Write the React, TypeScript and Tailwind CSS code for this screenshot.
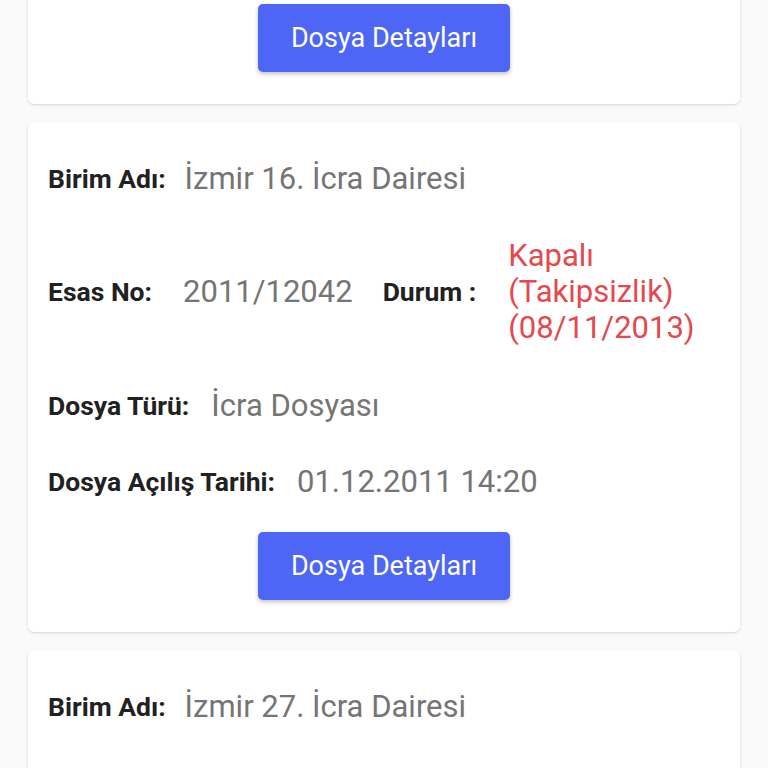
type CaseFile = {
  id: string;
  birim: string;
  esasNo: string;
  durum: string;
  tur: string;
  acilis: string;
};

const files: CaseFile[] = [
  {
    id: '1',
    birim: 'İzmir 12. İcra Dairesi',
    esasNo: '2010/9876',
    durum: 'Kapalı (Takipsizlik) (02/05/2013)',
    tur: 'İcra Dosyası',
    acilis: '14.06.2010 10:05',
  },
  {
    id: '2',
    birim: 'İzmir 16. İcra Dairesi',
    esasNo: '2011/12042',
    durum: 'Kapalı (Takipsizlik) (08/11/2013)',
    tur: 'İcra Dosyası',
    acilis: '01.12.2011 14:20',
  },
  {
    id: '3',
    birim: 'İzmir 27. İcra Dairesi',
    esasNo: '2012/4411',
    durum: 'Kapalı (Takipsizlik) (21/03/2014)',
    tur: 'İcra Dosyası',
    acilis: '09.02.2012 09:45',
  },
];

function Label({ children }: { children: React.ReactNode }) {
  return <span className="shrink-0 text-[26.5px] font-bold text-[#212121]">{children}</span>;
}

function Value({ children }: { children: React.ReactNode }) {
  return <span className="text-[31px] text-[#757575]">{children}</span>;
}

function FileCard({ file }: { file: CaseFile }) {
  return (
    <div className="rounded-md bg-white px-5 pt-[39px] pb-8 shadow-[0_1px_3px_rgba(0,0,0,0.16)]">
      <div className="flex flex-col leading-9">
        <div className="flex items-center gap-[19px]">
          <Label>Birim Adı:</Label>
          <Value>{file.birim}</Value>
        </div>

        <div className="mt-[41px] flex items-center">
          <Label>Esas No:</Label>
          <span className="ml-[31px] shrink-0 text-[31px] text-[#757575]">{file.esasNo}</span>
          <span className="ml-[30px] shrink-0 text-[26.5px] font-bold text-[#212121]">Durum :</span>
          <span className="ml-8 min-w-0 flex-1 text-[31px] text-[#e5484d]">{file.durum}</span>
        </div>

        <div className="mt-[42px] flex items-center gap-[22px]">
          <Label>Dosya Türü:</Label>
          <Value>{file.tur}</Value>
        </div>

        <div className="mt-10 flex items-center gap-[22px]">
          <Label>Dosya Açılış Tarihi:</Label>
          <Value>{file.acilis}</Value>
        </div>
      </div>

      <div className="mt-8 flex justify-center">
        <button className="h-[68px] w-[252px] rounded-[5px] bg-[#4d66f5] text-[27px] text-white shadow-[0_2px_4px_rgba(0,0,0,0.25)]">
          Dosya Detayları
        </button>
      </div>
    </div>
  );
}

export default function App() {
  return (
    <div className="h-[768px] overflow-hidden bg-[#fafafa] font-['Roboto',sans-serif]">
      <div className="-mt-[406px] flex flex-col gap-[18px] px-7">
        {files.map((file) => (
          <FileCard key={file.id} file={file} />
        ))}
      </div>
    </div>
  );
}
